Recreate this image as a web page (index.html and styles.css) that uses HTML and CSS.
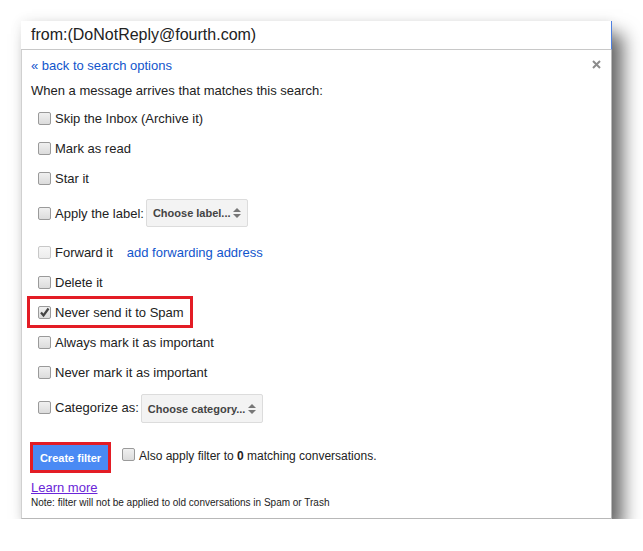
FILE: index.html
```html
<!DOCTYPE html>
<html>
<head>
<meta charset="utf-8">
<link rel="stylesheet" href="styles.css">
</head>
<body>
<div class="dialog">
  <div class="search">from:(DoNotReply@fourth.com)</div>
  <div class="panel">
    <span class="close"><svg width="9" height="9" viewBox="0 0 9 9"><path d="M1 1L8 8M8 1L1 8" stroke="#8c8c8c" stroke-width="2"/></svg></span>
    <a class="back">« back to search options</a>
    <div class="intro">When a message arrives that matches this search:</div>
    <div class="options">
      <div class="row"><span class="cb"></span><span>Skip the Inbox (Archive it)</span></div>
      <div class="row"><span class="cb"></span><span>Mark as read</span></div>
      <div class="row"><span class="cb"></span><span>Star it</span></div>
      <div class="row row-select"><span class="cb"></span><span>Apply the label:</span>
        <span class="select select-label">Choose label...<span class="arrows"><svg width="8" height="12" viewBox="0 0 8 12"><path d="M0 5L4 1L8 5Z M0 7L4 11L8 7Z" fill="#777"/></svg></span></span>
      </div>
      <div class="row row-forward"><span class="cb cb-disabled"></span><span>Forward it</span><a class="fwd">add forwarding address</a></div>
      <div class="row"><span class="cb"></span><span>Delete it</span></div>
      <div class="row highlight"><span class="cb cb-checked"><svg width="11" height="11" viewBox="0 0 11 11"><path d="M2 5.5L4.5 8.5L9.5 1.5" stroke="#444" stroke-width="2.2" fill="none"/></svg></span><span>Never send it to Spam</span></div>
      <div class="row"><span class="cb"></span><span>Always mark it as important</span></div>
      <div class="row"><span class="cb"></span><span>Never mark it as important</span></div>
      <div class="row row-cat"><span class="cb"></span><span>Categorize as:</span>
        <span class="select select-cat">Choose category...<span class="arrows"><svg width="8" height="12" viewBox="0 0 8 12"><path d="M0 5L4 1L8 5Z M0 7L4 11L8 7Z" fill="#777"/></svg></span></span>
      </div>
    </div>
    <div class="actions">
      <button class="create">Create filter</button>
      <span class="cb"></span><span class="also">Also apply filter to <b>0</b> matching conversations.</span>
    </div>
    <a class="learn">Learn more</a>
    <div class="note">Note: filter will not be applied to old conversations in Spam or Trash</div>
  </div>
</div>
</body>
</html>
```

FILE: styles.css
```css
html, body {
  margin: 0;
  padding: 0;
  background: #fff;
}
body {
  font-family: "Liberation Sans", Arial, sans-serif;
  color: #222;
  font-size: 13px;
}
.dialog {
  margin: 21px 0 0 21px;
  width: 591px;
  box-shadow: 0 0 12px rgba(0,0,0,0.08), 11px 13px 17px rgba(0,0,0,0.58);
}
.search {
  height: 28px;
  line-height: 28px;
  padding-left: 10px;
  font-size: 16px;
  color: #222;
  background: #fff;
  border-bottom: 1px solid #c8c8c8;
  border-right: 1px solid #4d7fe0;
}
.panel {
  position: relative;
  background: #fff;
  border-left: 1px solid #d0d0d0;
  border-right: 1px solid #b8b8b8;
  border-bottom: 1px solid #b8b8b8;
  padding: 8px 0 0 9px;
  height: 469px;
  box-sizing: border-box;
}
.close {
  position: absolute;
  right: 10px;
  top: 10px;
  width: 9px;
  height: 9px;
  display: block;
  line-height: 0;
}
.back {
  display: block;
  color: #1155cc;
  line-height: 16px;
}
.intro {
  margin-top: 9px;
  line-height: 16px;
}
.options {
  margin-top: 4px;
  display: flex;
  flex-direction: column;
}
.row {
  display: flex;
  align-items: center;
  height: 30px;
  padding-left: 7px;
}
.cb {
  width: 11px;
  height: 11px;
  border: 1px solid #9a9a9a;
  border-radius: 2px;
  background: linear-gradient(#f0f0f0, #dcdcdc);
  margin-right: 4px;
  flex: none;
  position: relative;
}
.cb-disabled {
  border-color: #c8c8c8;
  background: linear-gradient(#f7f7f7, #ececec);
}
.cb-checked svg {
  position: absolute;
  left: 0;
  top: 0;
}
.row-select {
  margin-top: 5px;
}
.row-forward {
  margin-top: 9px;
}
.row-cat {
  margin-top: 5px;
}
.fwd {
  color: #1155cc;
  margin-left: 14px;
}
.highlight {
  outline: 3px solid #e31c25;
  outline-offset: -2px;
  width: 164px;
  margin-left: -3px;
  padding-left: 10px;
  height: 30px;
  box-sizing: border-box;
}
.select {
  display: inline-flex;
  align-items: center;
  justify-content: space-between;
  box-sizing: border-box;
  background: #f3f3f3;
  border: 1px solid #dcdcdc;
  border-radius: 2px;
  font-size: 11px;
  font-weight: bold;
  color: #444;
  padding: 0 6px;
  margin-left: 2px;
}
.select-label {
  width: 102px;
  height: 28px;
}
.select-cat {
  width: 122px;
  height: 29px;
  margin-left: 2px;
  margin-top: 3px;
}
.arrows {
  line-height: 0;
}
.actions {
  margin-top: 23px;
  display: flex;
  align-items: center;
}
.create {
  background: #4a8af4;
  color: #fff;
  font-family: "Liberation Sans", Arial, sans-serif;
  font-weight: bold;
  font-size: 11px;
  border: none;
  width: 75px;
  height: 25px;
  padding: 0;
  margin-left: 2px;
  outline: 3px solid #e31c25;
  border-radius: 0;
}
.actions .cb {
  margin-left: 14px;
  margin-top: -6px;
}
.also {
  margin-top: -4px;
  font-size: 12px;
}
.learn {
  display: block;
  margin-top: 10px;
  color: #6a25d8;
  text-decoration: underline;
  line-height: 16px;
}
.note {
  font-size: 10px;
  color: #222;
  margin-top: 1px;
  line-height: 12px;
}
```
